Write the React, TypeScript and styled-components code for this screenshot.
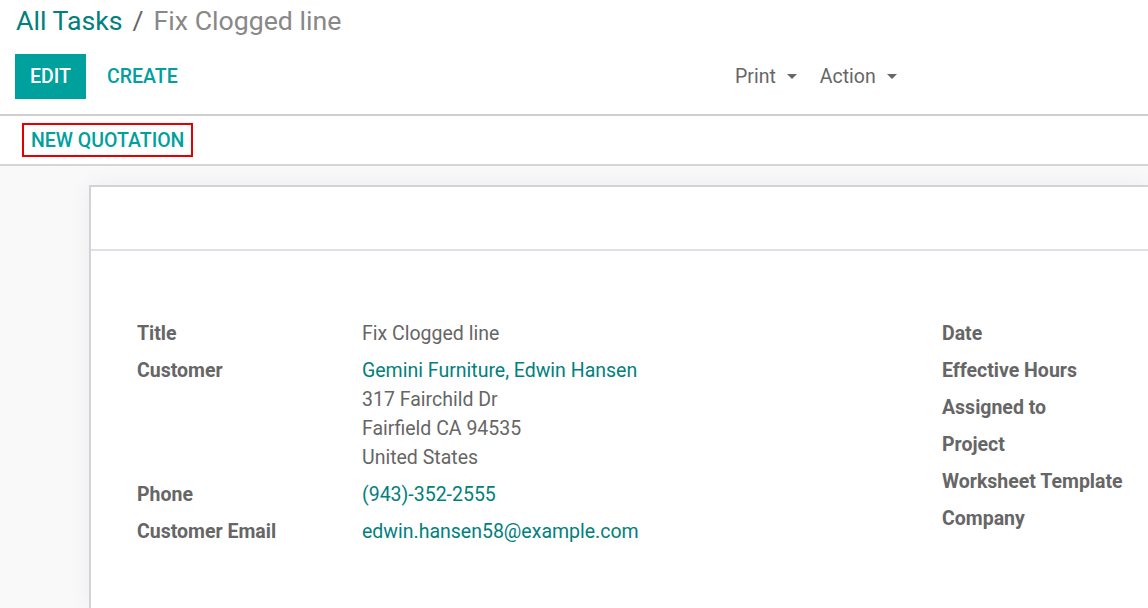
import React from "react";
import styled, { createGlobalStyle } from "styled-components";

const Global = createGlobalStyle`
  html, body { margin: 0; padding: 0; background: #fff; }
  body { font-family: Roboto, "Noto Sans", "Liberation Sans", sans-serif; color: #666; }
  * { box-sizing: border-box; }
`;

const Page = styled.div`
  width: 1148px;
  height: 608px;
  overflow: hidden;
  display: flex;
  flex-direction: column;
`;

const ControlPanel = styled.div`
  padding: 0 15px;
  border-bottom: 2px solid #cfcfcf;
`;

const Breadcrumb = styled.div`
  display: flex;
  align-items: center;
  height: 41px;
  font-size: 26.7px;
  padding-left: 1px;
`;

const Crumb = styled.span<{ $active?: boolean }>`
  color: ${(p) => (p.$active ? "#888" : "#01807d")};
`;

const Sep = styled.span`
  color: #666;
  margin: 0 10px;
`;

const ButtonRow = styled.div`
  display: flex;
  align-items: center;
  margin-top: 13px;
  height: 45px;
  margin-bottom: 15px;
`;

const Left = styled.div`
  display: flex;
  align-items: center;
  width: 720px;
`;

const PrimaryBtn = styled.button`
  height: 45px;
  width: 71px;
  background: #00a09d;
  color: #fff;
  border: none;
  font-family: inherit;
  font-size: 19.5px;
  font-weight: 500;
  padding: 0;
`;

const LinkBtn = styled.button`
  background: none;
  border: none;
  color: #00a09d;
  font-family: inherit;
  font-size: 19.5px;
  font-weight: 500;
  padding: 0;
  margin-left: 21px;
`;

const Dropdown = styled.div`
  display: flex;
  align-items: center;
  font-size: 19.5px;
  color: #666;
  margin-right: 23px;
`;

const Caret = styled.span`
  display: inline-block;
  width: 0;
  height: 0;
  border-left: 5px solid transparent;
  border-right: 5px solid transparent;
  border-top: 5px solid #666;
  margin-left: 11px;
`;

const StatusBar = styled.div`
  height: 50px;
  display: flex;
  align-items: center;
  padding-left: 22px;
  border-bottom: 2px solid #d5d5d5;
`;

const OutlineBtn = styled.button`
  height: 34px;
  padding: 0 7px;
  border: 2px solid #e50000;
  background: #fff;
  color: #00a09d;
  font-family: inherit;
  font-size: 19.5px;
  font-weight: 500;
`;

const Content = styled.div`
  flex: 1;
  background: #f9f9f9;
  padding: 19px 0 0 89px;
`;

const Sheet = styled.div`
  background: #fff;
  border: 2px solid #d0d4da;
  border-right: none;
  border-bottom: none;
  height: 100%;
  box-shadow: 0 0 22px rgba(0, 0, 0, 0.06);
`;

const SheetHeader = styled.div`
  height: 64px;
  border-bottom: 2px solid #dde1e5;
`;

const SheetBody = styled.div`
  display: flex;
  padding: 68px 0 0 46px;
`;

const Group = styled.div<{ $width: number }>`
  width: ${(p) => p.$width}px;
  flex-shrink: 0;
  display: flex;
  flex-direction: column;
`;

const Row = styled.div`
  display: flex;
  font-size: 19.5px;
  line-height: 29px;
  padding-bottom: 8px;
`;

const Label = styled.div<{ $width?: number }>`
  width: ${(p) => p.$width ?? 225}px;
  flex-shrink: 0;
  font-weight: 700;
  color: #666;
  white-space: nowrap;
`;

const Value = styled.div`
  color: #666;
  display: flex;
  flex-direction: column;
`;

const Link = styled.span`
  color: #01807d;
`;

export default function App() {
  return (
    <Page>
      <Global />
      <ControlPanel>
        <Breadcrumb>
          <Crumb>All Tasks</Crumb>
          <Sep>/</Sep>
          <Crumb $active>Fix Clogged line</Crumb>
        </Breadcrumb>
        <ButtonRow>
          <Left>
            <PrimaryBtn>EDIT</PrimaryBtn>
            <LinkBtn>CREATE</LinkBtn>
          </Left>
          <Dropdown>
            Print
            <Caret />
          </Dropdown>
          <Dropdown>
            Action
            <Caret />
          </Dropdown>
        </ButtonRow>
      </ControlPanel>
      <StatusBar>
        <OutlineBtn>NEW QUOTATION</OutlineBtn>
      </StatusBar>
      <Content>
        <Sheet>
          <SheetHeader />
          <SheetBody>
            <Group $width={805}>
              <Row>
                <Label>Title</Label>
                <Value>Fix Clogged line</Value>
              </Row>
              <Row>
                <Label>Customer</Label>
                <Value>
                  <Link>Gemini Furniture, Edwin Hansen</Link>
                  <span>317 Fairchild Dr</span>
                  <span>Fairfield CA 94535</span>
                  <span>United States</span>
                </Value>
              </Row>
              <Row>
                <Label>Phone</Label>
                <Value>
                  <Link>(943)-352-2555</Link>
                </Value>
              </Row>
              <Row>
                <Label>Customer Email</Label>
                <Value>
                  <Link>edwin.hansen58@example.com</Link>
                </Value>
              </Row>
            </Group>
            <Group $width={240}>
              <Row><Label>Date</Label></Row>
              <Row><Label>Effective Hours</Label></Row>
              <Row><Label>Assigned to</Label></Row>
              <Row><Label>Project</Label></Row>
              <Row><Label>Worksheet Template</Label></Row>
              <Row><Label>Company</Label></Row>
            </Group>
          </SheetBody>
        </Sheet>
      </Content>
    </Page>
  );
}
